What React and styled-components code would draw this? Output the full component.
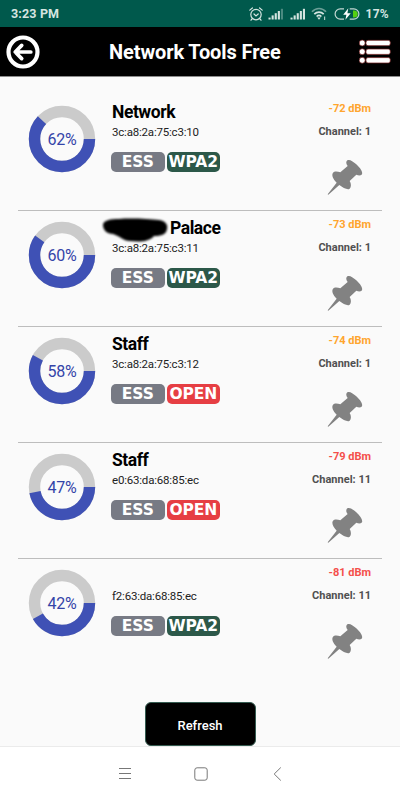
import React from 'react'
import styled, { createGlobalStyle } from 'styled-components'

const networks = [
  { id: 1, name: 'Network', mac: '3c:a8:2a:75:c3:10', level: 62, dbm: -72, channel: 1, security: 'WPA2' },
  { id: 2, name: 'Palace', masked: true, mac: '3c:a8:2a:75:c3:11', level: 60, dbm: -73, channel: 1, security: 'WPA2' },
  { id: 3, name: 'Staff', mac: '3c:a8:2a:75:c3:12', level: 58, dbm: -74, channel: 1, security: 'OPEN' },
  { id: 4, name: 'Staff', mac: 'e0:63:da:68:85:ec', level: 47, dbm: -79, channel: 11, security: 'OPEN' },
  { id: 5, name: '', mac: 'f2:63:da:68:85:ec', level: 42, dbm: -81, channel: 11, security: 'WPA2' },
]

const badgeColors = {
  ESS: '#777a84',
  WPA2: '#2c5849',
  OPEN: '#e63e43',
}

const GlobalStyle = createGlobalStyle`
  * {
    box-sizing: border-box;
  }
  body {
    margin: 0;
    background: #fafafa;
    font-family: Roboto, sans-serif;
  }
`

const AlarmIcon = () => (
  <svg width="14" height="14" viewBox="0 0 14 14" fill="none" stroke="#d5e5e1" strokeWidth="1.2" strokeLinecap="round">
    <circle cx="7" cy="7.6" r="5.2" />
    <path d="M.8 3.1 3.4 1M13.2 3.1 10.6 1M5 7l2 1.9L9.2 7M3 12l-1 1.2M11 12l1 1.2" />
  </svg>
)

const SignalIcon = ({ bars }) => (
  <svg width="16" height="12" viewBox="0 0 16 12">
    {[0, 1, 2, 3, 4].map(i => (
      <rect
        key={i}
        x={0.5 + i * 3.1}
        y={9.6 - i * 2.2}
        width="2.1"
        height={1.9 + i * 2.2}
        fill="#d5e5e1"
        opacity={i < bars ? 1 : 0.35}
      />
    ))}
  </svg>
)

const WifiIcon = () => (
  <svg width="17" height="14" viewBox="0 0 17 14" fill="none" stroke="#d5e5e1" strokeWidth="1.7">
    <path d="M1 4.8C5 .4 11 .4 15 4.8" opacity=".5" />
    <path d="M3.3 7.2c2.7-2.8 6.7-2.8 9.4 0M5.6 9.5c1.5-1.4 3.3-1.4 4.8 0" />
    <path d="m6.2 10.5 1.8 2.3 1.8-2.3Z" fill="#d5e5e1" stroke="none" />
    <path d="M13.6 9.5v3.5" strokeWidth="1.2" opacity=".8" />
  </svg>
)

const BatteryIcon = () => (
  <svg width="26" height="12" viewBox="0 0 26 12" fill="none">
    <path d="M10 .8H6.3a5.2 5.2 0 0 0 0 10.4H10M15.7 .8h4a5.2 5.2 0 0 1 0 10.4h-4" stroke="#c3d8d3" strokeWidth="1.2" />
    <path d="M19 2.4h1.1a3.6 3.6 0 0 1 0 7.2H19Z" fill="#55cf10" />
    <path d="M14.3.3 9.2 6.8h3.2l-1 4.9 5.3-6.5h-3.3Z" fill="#fff" />
  </svg>
)

const BackIcon = () => (
  <svg width="34" height="34" viewBox="0 0 34 34" fill="none" stroke="#fff">
    <circle cx="17" cy="17" r="14.5" strokeWidth="4.2" />
    <path d="M24.8 17H9.5M15.7 10.4 9.2 17l6.5 6.6" strokeWidth="3.7" strokeLinecap="round" strokeLinejoin="round" />
  </svg>
)

const ListIcon = () => (
  <svg width="32" height="26" viewBox="0 0 32 26" fill="#fff" stroke="#6b1717" strokeWidth=".7">
    {[4, 12.7, 21.3].map(y => (
      <g key={y}>
        <circle cx="3.2" cy={y} r="3" />
        <rect x="7" y={y - 2.7} width="24.3" height="5.4" rx="2" />
      </g>
    ))}
  </svg>
)

const PinIcon = () => (
  <svg width="36" height="36" viewBox="80 192 108 108" fill="#828282">
    <path d="M82 298 109 263C98 252 93 240 98 233C102 228 112 229 120 232L142 213C136 206 137 199 141 196C148 192 156 198 167 207C180 219 188 230 185 238C181 243 174 242 168 239L148 258C153 266 153 276 148 281C142 286 128 278 117 270L84 299Z" />
  </svg>
)

const Scribble = () => (
  <ScribbleSvg viewBox="0 0 70 28">
    <defs>
      <filter id="soft">
        <feGaussianBlur stdDeviation="1.2" />
      </filter>
    </defs>
    <path
      d="M2 9C2 4 10 3 18 3C30 2 48 3 58 4C65 5 67 9 66 13C65 19 60 20 53 20C48 26 38 26 29 25C22 25 19 20 12 18C6 18 2 14 2 9Z"
      filter="url(#soft)"
    />
  </ScribbleSvg>
)

// the arc starts at three o'clock and runs clockwise
const Ring = ({ level }) => (
  <RingWrapper>
    <svg width="68" height="68" viewBox="0 0 68 68" fill="none" strokeWidth="11.4">
      <circle cx="34" cy="34" r="27.5" stroke="#cbcbcb" />
      <circle cx="34" cy="34" r="27.5" stroke="#3f51b5" pathLength="100" strokeDasharray={`${level} 100`} />
    </svg>
    <span>{level}%</span>
  </RingWrapper>
)

const Network = ({ name, masked, mac, level, dbm, channel, security }) => {
  return <Row>
    <Ring level={level} />
    <Info>
      <Name $masked={masked}>
        {masked && <Scribble />}
        {name}
      </Name>
      <Mac>{mac}</Mac>
      <Badges>
        <Badge $type="ESS">ESS</Badge>
        <Badge $type={security}>{security}</Badge>
      </Badges>
    </Info>
    <Side>
      <Dbm $weak={dbm < -75}>{dbm} dBm</Dbm>
      <Channel>Channel: {channel}</Channel>
      <PinButton><PinIcon /></PinButton>
    </Side>
  </Row>
}

const App = () => {
  return <Screen>
    <GlobalStyle />
    <StatusBar>
      <Time>3:23 PM</Time>
      <StatusIcons>
        <AlarmIcon />
        <SignalIcon bars={4} />
        <SignalIcon bars={5} />
        <WifiIcon />
        <BatteryIcon />
        <Percent>17%</Percent>
      </StatusIcons>
    </StatusBar>
    <Header>
      <BackIcon />
      <h1>Network Tools Free</h1>
      <ListIcon />
    </Header>
    <List>
      {networks.map(network => <Network key={network.id} {...network} />)}
    </List>
    <Footer>
      <RefreshButton>Refresh</RefreshButton>
    </Footer>
    <NavBar>
      <svg width="14" height="14" viewBox="0 0 14 14" stroke="#777" fill="none">
        <path d="M1 1.5h12M1 6.5h12M1 11.5h12" />
      </svg>
      <svg width="14" height="14" viewBox="0 0 14 14" stroke="#777" fill="none">
        <rect x=".8" y=".8" width="12.4" height="12.4" rx="2.3" />
      </svg>
      <svg width="14" height="14" viewBox="0 0 14 14" stroke="#777" fill="none">
        <path d="M10.8.5 4.2 7l6.6 6.5" />
      </svg>
    </NavBar>
  </Screen>
}

const Screen = styled.div`
  width: 400px;
  height: 800px;
  display: flex;
  flex-direction: column;
  overflow: hidden;
  background: #fafafa;
`

const StatusBar = styled.div`
  height: 27px;
  flex: none;
  display: flex;
  align-items: center;
  justify-content: space-between;
  padding: 1px 11px 0;
  background: #00594c;
  color: #d5e5e1;
`

const Time = styled.span`
  font-size: 12.5px;
  font-weight: 700;
  line-height: 14px;
  letter-spacing: 0.15px;
`

const StatusIcons = styled.div`
  display: flex;
  align-items: center;
  gap: 5.5px;
  svg {
    display: block;
  }
`

const Percent = styled.span`
  font-size: 12px;
  font-weight: 700;
  line-height: 14px;
  letter-spacing: 0.3px;
`

const Header = styled.header`
  height: 50px;
  flex: none;
  display: flex;
  align-items: center;
  padding: 0 9px 0 6px;
  background: #000;
  border-bottom: 1px solid #8c8c8c;
  h1 {
    flex: 1;
    margin: 0 0 0 69px;
    color: #fff;
    font-size: 20px;
    font-weight: 700;
    letter-spacing: -0.1px;
  }
`

const List = styled.main`
  flex: none;
  padding: 18px 18px 0;
`

const Row = styled.article`
  height: 116px;
  display: flex;
  align-items: flex-start;
  border-bottom: 1px solid #bdbdbd;
  &:last-child {
    border-bottom: none;
  }
`

const RingWrapper = styled.div`
  display: grid;
  place-items: center;
  margin: 10px 15px 0 10px;
  svg,
  span {
    grid-area: 1 / 1;
  }
  span {
    padding-top: 1px;
    color: #3444a8;
    font-size: 16px;
    line-height: 18px;
    letter-spacing: -0.2px;
  }
`

const Info = styled.div`
  flex: 1;
  padding-top: 6px;
`

const Name = styled.h2`
  position: relative;
  height: 22px;
  margin: 0 0 0 1px;
  padding-left: ${({ $masked }) => ($masked ? '58px' : '0')};
  color: #000;
  font-size: 17.5px;
  font-weight: 700;
  line-height: 22px;
  letter-spacing: -0.45px;
`

const ScribbleSvg = styled.svg`
  position: absolute;
  left: -11px;
  top: -1px;
  width: 70px;
  height: 28px;
`

const Mac = styled.p`
  margin: 1px 0 0 1px;
  color: #222;
  font-size: 11.5px;
  line-height: 16px;
  letter-spacing: -0.2px;
`

const Badges = styled.div`
  display: flex;
  gap: 2px;
  margin-top: 12px;
`

const Badge = styled.span`
  width: 53.5px;
  height: 20px;
  border-radius: 5px;
  background: ${({ $type }) => badgeColors[$type]};
  color: #fff;
  font-family: 'DejaVu Sans', sans-serif;
  font-size: 15.5px;
  font-weight: 700;
  line-height: 20px;
  letter-spacing: -0.1px;
  text-align: center;
`

const Side = styled.div`
  display: flex;
  flex-direction: column;
  align-items: flex-end;
  padding: 6px 11px 0 0;
`

const Dbm = styled.span`
  color: ${({ $weak }) => ($weak ? '#f44f4b' : '#ffa52e')};
  font-size: 11px;
  font-weight: 700;
  line-height: 16px;
`

const Channel = styled.span`
  margin-top: 7px;
  color: #505050;
  font-size: 11px;
  font-weight: 700;
  line-height: 16px;
`

const PinButton = styled.button`
  display: block;
  margin: 19px 8px 0 0;
  padding: 0;
  border: none;
  background: none;
  svg {
    display: block;
  }
`

const Footer = styled.footer`
  flex: 1;
  display: flex;
  align-items: flex-end;
  justify-content: center;
  border-bottom: 1px solid #ebebeb;
`

const RefreshButton = styled.button`
  width: 111px;
  height: 44px;
  padding: 2px 0 0;
  border: 1.5px solid #345b50;
  border-radius: 6px;
  background: #000;
  color: #fff;
  font-family: inherit;
  font-size: 13px;
  font-weight: 500;
`

const NavBar = styled.nav`
  height: 53px;
  flex: none;
  display: flex;
  align-items: center;
  justify-content: center;
  gap: 62px;
  padding-left: 2px;
  background: #fff;
`

export default App
